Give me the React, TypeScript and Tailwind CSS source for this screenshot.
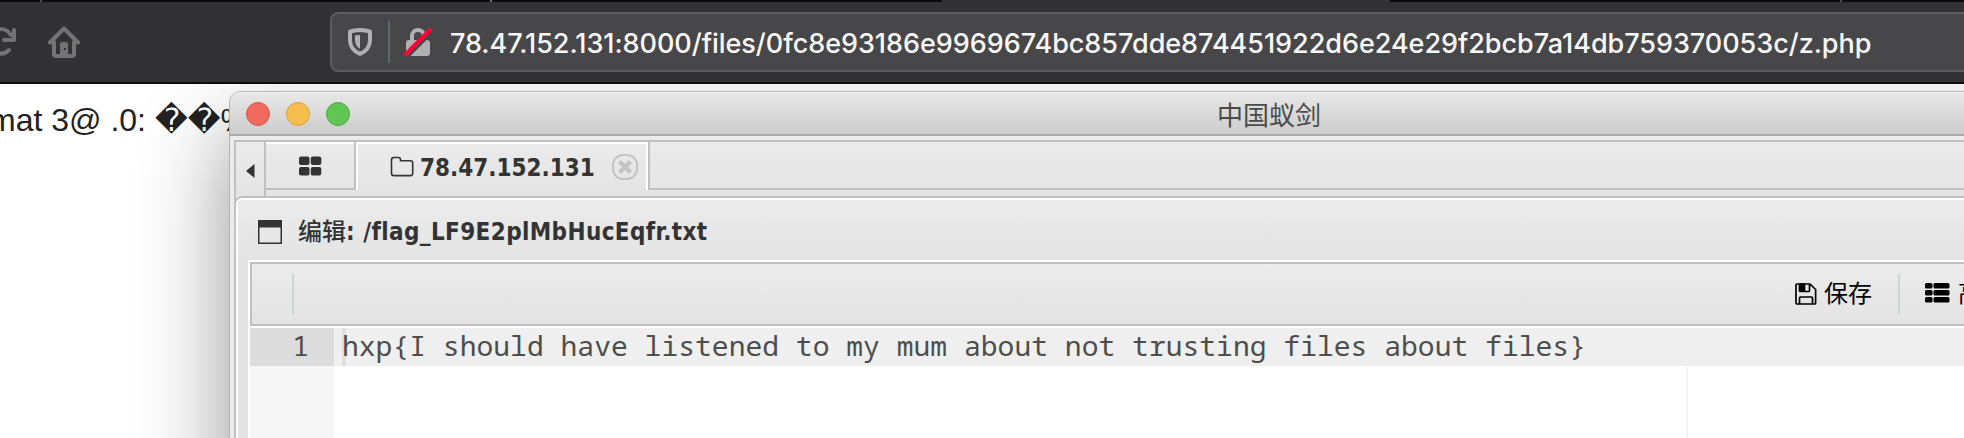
import React from "react";

const gradient = "bg-linear-to-b from-[#ebebeb] to-[#e4e4e4]";

function TabStrip() {
  return <div className="h-[2px] w-full shrink-0 flex bg-[#0c0c0d]">
    <div className="ml-[40px] w-[2px] bg-[#4a4a4c]" />
    <div className="ml-[448px] w-[2px] bg-[#6a6a6c]" />
    <div className="ml-[450px] w-[448px] bg-[#323234]" />
    <div className="ml-[450px] w-[2px] bg-[#4a4a4c]" />
  </div>;
}

function ReloadIcon() {
  return <svg className="block h-[40px] w-[18px]" viewBox="0 0 18 40" fill="none" stroke="#737373" strokeWidth="4" strokeLinecap="round" strokeLinejoin="round">
    <path d="M-4 12.500C2 9.500 7.500 12 11 17M14 12v10H4M9 32C6 35 1 37 -5 34" />
  </svg>;
}

function HomeIcon() {
  return <svg className="block h-[40px] w-[40px]" viewBox="0 0 40 40" fill="none" stroke="#737373" strokeWidth="4" strokeLinecap="round" strokeLinejoin="round">
    <path d="M6 22.500L20 8.500L34 22.500" />
    <path d="M10 22v12q0 2 2 2h16q2 0 2-2V22" />
    <path d="M16 36V24.500q0-2.500 2.500-2.500h3q2.500 0 2.500 2.500V36z" fill="#737373" stroke="none" />
    <rect x="20" y="28" width="2" height="2" fill="#323234" stroke="none" />
  </svg>;
}

function ShieldIcon() {
  return <svg className="block h-[32px] w-[28px]" viewBox="0 0 28 32" fill="none">
    <path d="M14 4C18 4 21.500 4.700 24 5.700V14c0 6-3.500 11.500-10 13.800C7.500 25.500 4 20 4 14V5.700C6.500 4.700 10 4 14 4z" stroke="#b1b1b3" strokeWidth="4" strokeLinejoin="round" />
    <path d="M14 9c-2 0-3.600.2-5 .6V14c0 3.800 1.800 7 5 8.800z" fill="#b1b1b3" />
  </svg>;
}

function BrokenLockIcon() {
  return <svg className="block h-[32px] w-[32px]" viewBox="0 0 32 32" fill="none">
    <path d="M10 16V10a6 6 0 0 1 12 0V16" stroke="#b1b1b3" strokeWidth="4" />
    <rect x="4" y="14" width="24" height="16" rx="3" fill="#b1b1b3" />
    <path d="M5.500 31L31 5.500" stroke="#474749" strokeWidth="3" />
    <path d="M4 28L28 4" stroke="#ff0039" strokeWidth="4.200" strokeLinecap="round" />
  </svg>;
}

function NavBar() {
  return <div className="h-[82px] w-full shrink-0 flex items-start bg-[#323234] border-b-2 border-[#0c0c0d]">
    <div className="w-[44px] pt-[16px]"><ReloadIcon /></div>
    <div className="w-[286px] pt-[18px]"><HomeIcon /></div>
    <div className="mt-[10px] flex h-[60px] flex-1 items-center rounded-l-[8px] border-2 border-r-0 border-[#5c5c5e] bg-[#474749]">
      <div className="ml-[14px]"><ShieldIcon /></div>
      <div className="ml-[14px] h-[42px] w-[2px] bg-[#606873]" />
      <div className="ml-[12px]"><BrokenLockIcon /></div>
      <span className="ml-[16px] mt-[4px] whitespace-nowrap font-['Inter'] text-[27px] font-medium leading-[52px] tracking-[-0.035px] text-[#f9f9fa]">78.47.152.131:8000/files/0fc8e93186e9969674bc857dde874451922d6e24e29f2bcb7a14db759370053c/z.php</span>
    </div>
  </div>;
}

function TitleBar() {
  return <div className="flex h-[44px] items-center border-b-2 border-[#a9a9a9] bg-linear-to-b from-[#e8e8e8] to-[#cccccc] pt-[2px] shadow-[inset_0_1px_0_#f6f6f6]">
    <div className="ml-[16px] flex w-[978px] gap-[16px]">
      <div className="size-[24px] rounded-full border border-[#d9564c] bg-[#ee6a5f]" />
      <div className="size-[24px] rounded-full border border-[#d9a23c] bg-[#f5be4f]" />
      <div className="size-[24px] rounded-full border border-[#4ba83e] bg-[#62c655]" />
    </div>
    <span className="-mt-[1px] ml-[-7px] font-['Noto_Sans_CJK_SC',sans-serif] text-[26px] leading-[40px] text-[#4b4b4b]">中国蚁剑</span>
  </div>;
}

function Tabs() {
  return <div className="flex h-[56px] border-t-2 border-[#c0c0c0] bg-linear-to-b from-[#ebebeb] to-[#e4e4e4]">
    <div className="flex w-[30px] items-center border-r-2 border-[#c0c0c0] pl-[10px] pt-[4px]">
      <svg className="block h-[14px] w-[9px]" viewBox="0 0 9 14"><path d="M0 7L8.500 0v14z" fill="#333" /></svg>
    </div>
    <div className="flex h-[48px] w-[90px] items-center justify-center border-r-2 border-b-2 border-[#c0c0c0] pt-[2px] shadow-[inset_0_2px_0_#fff]">
      <svg className="block h-[20px] w-[24px]" viewBox="0 0 24 20" fill="#333"><rect x="1" y="0.500" width="10.500" height="8.500" rx="2"/><rect x="12.800" y="0.500" width="10.500" height="8.500" rx="2"/><rect x="1" y="11" width="10.500" height="8.500" rx="2"/><rect x="12.800" y="11" width="10.500" height="8.500" rx="2"/></svg>
    </div>
    <div className="flex h-[48px] w-[292px] items-center border-x-2 border-t-2 border-white">
      <svg className="ml-[32px] block h-[22px] w-[24px]" viewBox="0 0 24 22" fill="none" stroke="#333" strokeWidth="1.600"><path d="M1.500 4q0-2.500 2.500-2.500h4.500q2 0 2 2v1.200h10q2.200 0 2.200 2.300v10.300q0 2.300-2.300 2.300H4q-2.500 0-2.500-2.400z" /></svg>
      <span className="ml-[6px] mt-[2px] w-[176px] whitespace-nowrap font-['DejaVu_Sans_Condensed','DejaVu_Sans'] text-[24px] font-bold leading-[44px] text-[#333]">78.47.152.131</span>
      <svg className="ml-[16px] block h-[26px] w-[26px]" viewBox="0 0 26 26" fill="none" stroke="#c4c4c4"><rect x="1" y="1" width="24" height="24" rx="10" strokeWidth="2"/><path d="M7.500 7.500l11 11M18.500 7.500l-11 11" strokeWidth="4.400" /></svg>
    </div>
    <div className="h-[48px] flex-1 border-b-2 border-l-2 border-[#c0c0c0]" />
  </div>;
}

function Toolbar() {
  return <div className={"flex h-[64px] items-center border-2 border-r-0 border-[#c0c0c0] text-black " + gradient}>
    <div className="ml-[40px] h-[40px] w-[2px] bg-[#c9d6d6]" />
    <svg className="-mt-[1px] ml-[1501px] block h-[22px] w-[22px]" viewBox="0 0 22 22" fill="none" stroke="#000" strokeWidth="1.700"><path d="M1 2q0-1 1-1h13l5.600 5.500V20q0 1-1 1H2q-1 0-1-1zM4.500 21v-6q0-1 1-1h11q1 0 1 1v6M4.500 1v6.500q0 1 1 1h8q1 0 1-1V1" /><path d="M5 1h4.500v7H5z" fill="#000" /></svg>
    <span className="-mt-[5px] ml-[7px] w-[48px] whitespace-nowrap font-['Noto_Sans_CJK_SC',sans-serif] text-[24px] leading-[40px]">保存</span>
    <div className="ml-[26px] h-[40px] w-[2px] bg-[#c9d6d6]" />
    <svg className="-mt-[2px] ml-[25px] block h-[20px] w-[25px] shrink-0" viewBox="0 0 25 20" fill="#000"><rect y="0" width="7.500" height="5.500" rx="1.500"/><rect x="8.500" y="0" width="16" height="5.500" rx="1.500"/><rect y="7" width="7.500" height="5.500" rx="1.500"/><rect x="8.500" y="7" width="16" height="5.500" rx="1.500"/><rect y="14" width="7.500" height="5.500" rx="1.500"/><rect x="8.500" y="14" width="16" height="5.500" rx="1.500"/></svg>
    <span className="-mt-[5px] ml-[8px] w-0 whitespace-nowrap font-['Noto_Sans_CJK_SC',sans-serif] text-[24px] leading-[40px]">高</span>
  </div>;
}

function Editor() {
  return <div className="flex flex-1 bg-white font-['Noto_Sans_Mono','DejaVu_Sans_Mono'] text-[28px] leading-[34px] text-[#4d4d4c]">
    <div className="w-[84px] bg-[#f6f6f6]">
      <div className="h-[38px] bg-[#dcdcdc] pr-[25px] text-right">1</div>
    </div>
    <div className="flex flex-1 flex-col">
      <div className="flex h-[38px] items-start bg-[#efefef] pl-[8px]">
        <div className="h-[38px] w-[4px] bg-[#dfdfdf]" />
        <span className="ml-[-4px] whitespace-pre tracking-[0.01px]">{"hxp{I should have listened to my mum about not trusting files about files}"}</span>
      </div>
      <div className="ml-[1352px] w-[2px] flex-1 bg-[#f4f4f4]" />
    </div>
  </div>;
}

function AntSwordWindow() {
  return <div className="absolute left-[229px] top-[7px] flex h-[420px] w-[1900px] flex-col overflow-hidden rounded-tl-[11px] border border-[#b4b4b4] bg-[#ececec] shadow-[0_40px_90px_rgba(0,0,0,0.42)]">
    <TitleBar />
    <div className="ml-[4px] mt-[4px] flex flex-1 flex-col border-l-2 border-[#c0c0c0]">
      <Tabs />
      <div className="mt-[2px] flex flex-1 flex-col rounded-tl-[6px] border-l-2 border-t-2 border-white bg-[#e4e4e4] outline-2 outline-[#c0c0c0]">
        <div className={"flex h-[60px] items-center rounded-tl-[4px] " + gradient}>
          <svg className="ml-[20px] mt-[4px] block h-[24px] w-[24px]" viewBox="0 0 24 24"><path d="M0 0h24v24H0z" fill="#333"/><path d="M1.500 7.500h21v15h-21z" fill="#e7e7e7"/></svg>
          <span className="ml-[16px] mt-[4px] whitespace-nowrap font-['DejaVu_Sans_Condensed','DejaVu_Sans','Noto_Sans_CJK_SC',sans-serif] text-[24px] font-bold leading-[56px] text-[#333]"><span className="font-medium">编辑</span>: <span className="ml-px tracking-[0.38px]">/flag_LF9E2plMbHucEqfr.txt</span></span>
        </div>
        <div className="ml-[10px] flex flex-1 flex-col border-l-2 border-t-2 border-white">
          <Toolbar />
          <div className="h-[2px] bg-white" />
          <Editor />
        </div>
      </div>
    </div>
  </div>;
}

export default function App() {
  return <div className="flex h-[438px] w-[1964px] flex-col overflow-hidden bg-white">
    <TabStrip />
    <NavBar />
    <main className="relative flex-1 overflow-hidden bg-white">
      <p className="ml-[-11px] mt-[16px] whitespace-pre font-['Liberation_Sans','DejaVu_Sans'] text-[32px] leading-[40px] text-[#222]">mat 3@ .0: ��%</p>
      <AntSwordWindow />
    </main>
  </div>;
}
